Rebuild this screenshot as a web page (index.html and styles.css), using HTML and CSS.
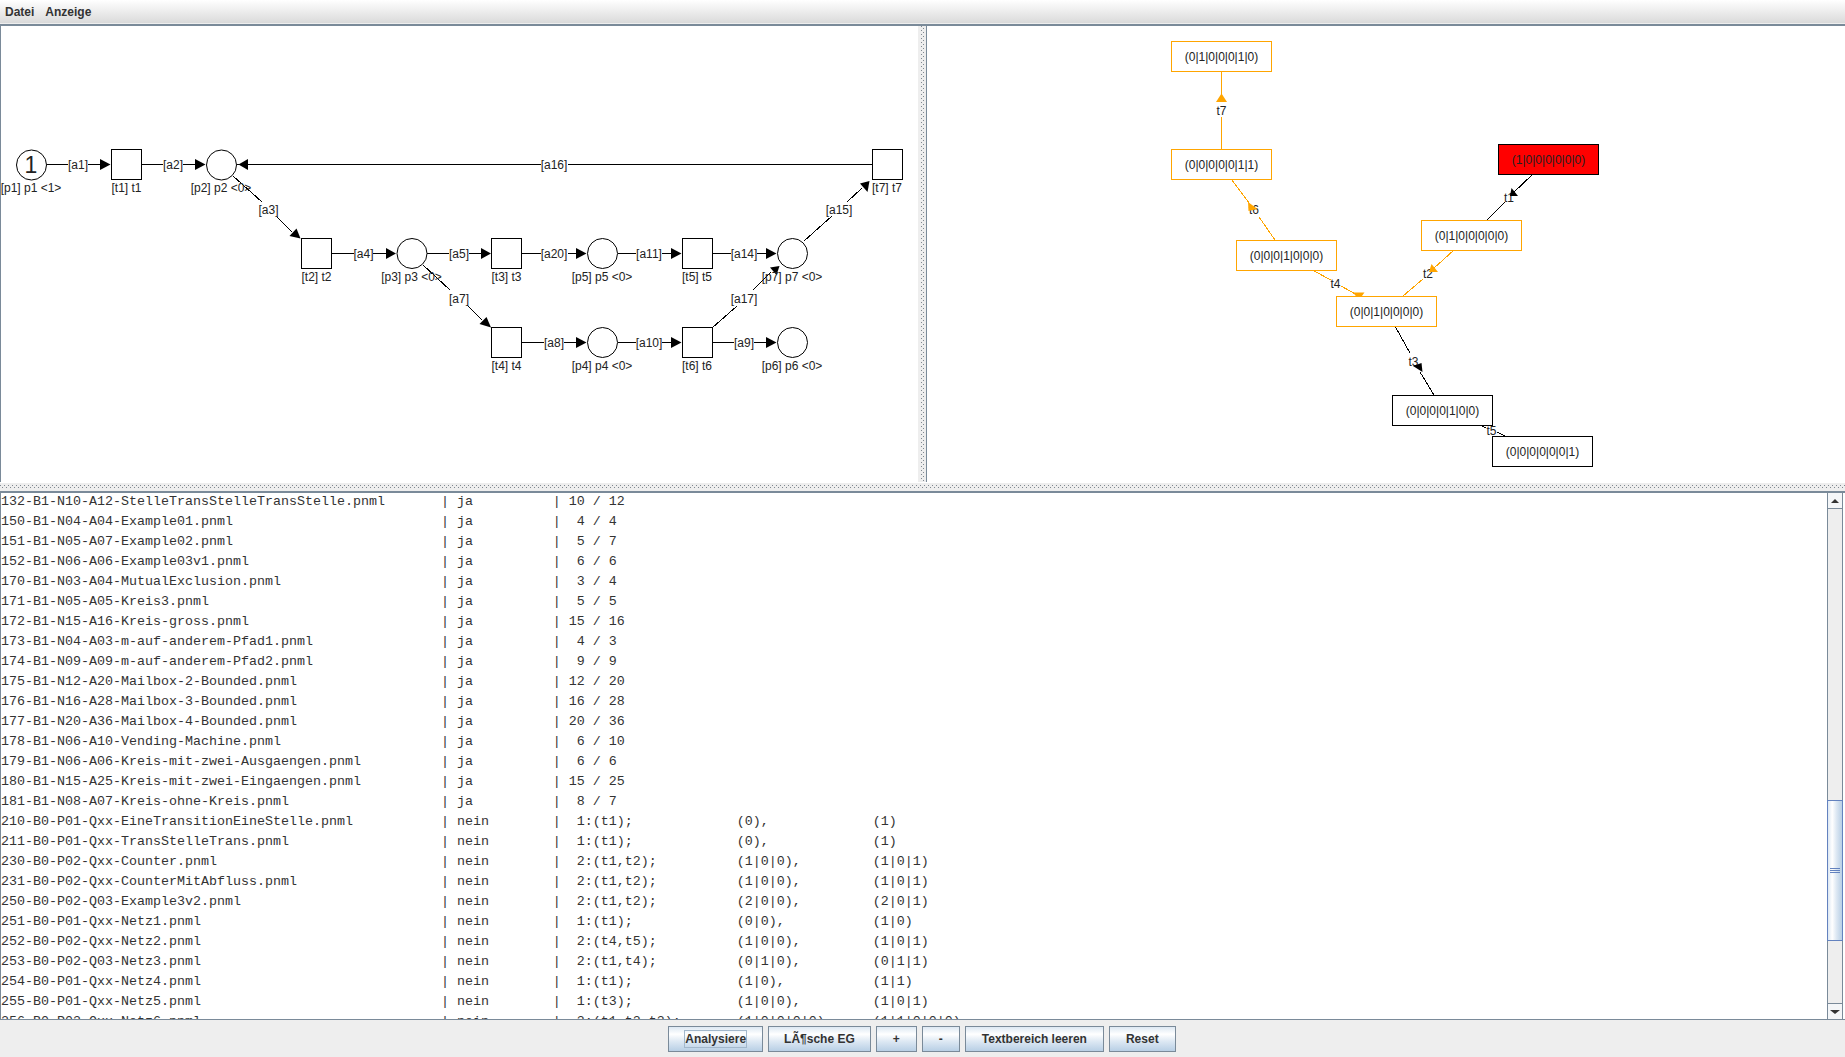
FILE: index.html
```html
<!DOCTYPE html>
<html lang="de">
<head>
  <meta charset="UTF-8">
  <title>Petri-Netz Analyse</title>
  <link rel="stylesheet" href="styles.css">
</head>
<body>

  <div class="menubar">
    <span class="menu-item">Datei</span>
    <span class="menu-item">Anzeige</span>
  </div>

  <div class="main">
    <div class="pane pane-left">
      <svg class="graph" width="917" height="456" viewBox="1 26 917 456">
        <!-- arcs -->
        <path class="arc" d="M47 164.5H68M88 164.5H100"/>
        <path class="arc" d="M142 164.5H163M183 164.5H195"/>
        <path class="arc" d="M237 164.5H540.5M567.5 164.5H872"/>
        <path class="arc" d="M233 176L262 202M277 217L292 232"/>
        <path class="arc" d="M332 253.5H354M373 253.5H386"/>
        <path class="arc" d="M427 253.5H449M469 253.5H481"/>
        <path class="arc" d="M522 253.5H540.5M567.5 253.5H576"/>
        <path class="arc" d="M618 253.5H636M662 253.5H671"/>
        <path class="arc" d="M713 253.5H731M757 253.5H766"/>
        <path class="arc" d="M423 265L450 290M467 305L482 320"/>
        <path class="arc" d="M522 342.5H544M564 342.5H576"/>
        <path class="arc" d="M618 342.5H636M662 342.5H671"/>
        <path class="arc" d="M713 342.5H734M754 342.5H766"/>
        <path class="arc" d="M712 328L737 306M753 290L771 272"/>
        <path class="arc" d="M804 241L832 216M847 202L862 188"/>

        <!-- arrow heads -->
        <polygon points="100,159 100,170 110.500,164.500"/>
        <polygon points="195,159 195,170 205.500,164.500"/>
        <polygon points="248,159 248,170 238.500,164.500"/>
        <polygon points="289.500,236 296.500,228.500 300.500,238.500"/>
        <polygon points="386,248 386,259 396,253.500"/>
        <polygon points="481,248 481,259 491,253.500"/>
        <polygon points="576,248 576,259 586.500,253.500"/>
        <polygon points="671,248 671,259 681.500,253.500"/>
        <polygon points="766,248 766,259 776.500,253.500"/>
        <polygon points="479.500,324 486.500,317 491,327.500"/>
        <polygon points="576,337 576,348 586.500,342.500"/>
        <polygon points="671,337 671,348 681.500,342.500"/>
        <polygon points="766,337 766,348 776.500,342.500"/>
        <polygon points="770,267.500 776.500,275 779.500,266"/>
        <polygon points="860,183.500 867.500,192 869.500,181"/>

        <!-- places -->
        <circle class="node" cx="31.500" cy="165" r="15"/>
        <circle class="node" cx="221.500" cy="165" r="15"/>
        <circle class="node" cx="412" cy="253.500" r="15"/>
        <circle class="node" cx="602.500" cy="253.500" r="15"/>
        <circle class="node" cx="792.500" cy="253.500" r="15"/>
        <circle class="node" cx="602.500" cy="342.500" r="15"/>
        <circle class="node" cx="792.500" cy="342.500" r="15"/>
        <text class="token" x="31" y="173">1</text>

        <!-- transitions -->
        <rect class="node" x="111.500" y="149.500" width="30" height="30"/>
        <rect class="node" x="301.500" y="238.500" width="30" height="30"/>
        <rect class="node" x="491.500" y="238.500" width="30" height="30"/>
        <rect class="node" x="682.500" y="238.500" width="30" height="30"/>
        <rect class="node" x="491.500" y="327.500" width="30" height="30"/>
        <rect class="node" x="682.500" y="327.500" width="30" height="30"/>
        <rect class="node" x="872.500" y="149.500" width="30" height="30"/>

        <!-- arc labels -->
        <text x="78" y="169">[a1]</text>
        <text x="173" y="169">[a2]</text>
        <text x="554" y="169">[a16]</text>
        <text x="268.500" y="214">[a3]</text>
        <text x="363.500" y="258">[a4]</text>
        <text x="459" y="258">[a5]</text>
        <text x="554" y="258">[a20]</text>
        <text x="649" y="258">[a11]</text>
        <text x="744" y="258">[a14]</text>
        <text x="459" y="303">[a7]</text>
        <text x="744" y="303">[a17]</text>
        <text x="839" y="214">[a15]</text>
        <text x="554" y="347">[a8]</text>
        <text x="649" y="347">[a10]</text>
        <text x="744" y="347">[a9]</text>

        <!-- node labels -->
        <text x="31" y="192">[p1] p1 &lt;1&gt;</text>
        <text x="126.500" y="192">[t1] t1</text>
        <text x="221" y="192">[p2] p2 &lt;0&gt;</text>
        <text x="887" y="192">[t7] t7</text>
        <text x="316.500" y="281">[t2] t2</text>
        <text x="411.500" y="281">[p3] p3 &lt;0&gt;</text>
        <text x="506.500" y="281">[t3] t3</text>
        <text x="602" y="281">[p5] p5 &lt;0&gt;</text>
        <text x="697" y="281">[t5] t5</text>
        <text x="792" y="281">[p7] p7 &lt;0&gt;</text>
        <text x="506.500" y="370">[t4] t4</text>
        <text x="602" y="370">[p4] p4 &lt;0&gt;</text>
        <text x="697" y="370">[t6] t6</text>
        <text x="792" y="370">[p6] p6 &lt;0&gt;</text>
      </svg>
    </div>
    <div class="divider-v"></div>
    <div class="pane">
      <svg class="graph" width="918" height="456" viewBox="927 26 918 456">
        <!-- edges -->
        <path class="arc orange" d="M1221.500 71V102M1221.500 117V149"/>
        <path class="arc orange" d="M1232 180L1249 203M1259 217L1275 240"/>
        <path class="arc orange" d="M1314 271L1331 280M1341 286L1359 296"/>
        <path class="arc orange" d="M1454 250L1433 269M1423 279L1403 296"/>
        <path class="arc" d="M1532 175L1513 193M1505 202L1487 220"/>
        <path class="arc" d="M1395.500 327L1410 353M1420 372L1434 395"/>
        <path class="arc" d="M1482 426L1486 428M1497 432L1505 436"/>

        <!-- edge labels -->
        <text x="1221.500" y="115">t7</text>
        <text x="1254" y="214">t6</text>
        <text x="1335.500" y="288">t4</text>
        <text x="1428" y="278">t2</text>
        <text x="1509" y="202">t1</text>
        <text x="1413.500" y="366">t3</text>
        <text x="1491.500" y="435">t5</text>

        <!-- arrow heads -->
        <polygon class="head-orange" points="1221.500,93.500 1216,102 1227,102"/>
        <polygon class="head-orange" points="1248,202 1248.500,211 1257.500,209"/>
        <polygon class="head-orange" points="1353,292.500 1364.500,292.500 1359,300"/>
        <polygon class="head-orange" points="1431.500,264 1438,272 1429,272"/>
        <polygon points="1511.500,188 1518,196 1510,196"/>
        <polygon points="1413,366 1421.500,363 1422.500,372"/>

        <!-- states -->
        <rect class="state orange" x="1171.500" y="41.500" width="100" height="30"/>
        <rect class="state orange" x="1171.500" y="149.500" width="100" height="30"/>
        <rect class="state orange" x="1236.500" y="240.500" width="100" height="30"/>
        <rect class="state orange" x="1421.500" y="220.500" width="100" height="30"/>
        <rect class="state orange" x="1336.500" y="296.500" width="100" height="30"/>
        <rect class="state start" x="1498.500" y="144.500" width="100" height="30"/>
        <rect class="state" x="1392.500" y="395.500" width="100" height="30"/>
        <rect class="state" x="1492.500" y="436.500" width="100" height="30"/>

        <text x="1221.500" y="61">(0|1|0|0|0|1|0)</text>
        <text x="1221.500" y="169">(0|0|0|0|0|1|1)</text>
        <text x="1286.500" y="260">(0|0|0|1|0|0|0)</text>
        <text x="1471.500" y="240">(0|1|0|0|0|0|0)</text>
        <text x="1386.500" y="316">(0|0|1|0|0|0|0)</text>
        <text x="1548.500" y="164">(1|0|0|0|0|0|0)</text>
        <text x="1442.500" y="415">(0|0|0|0|1|0|0)</text>
        <text x="1542.500" y="456">(0|0|0|0|0|0|1)</text>
      </svg>
    </div>
  </div>

  <div class="divider-h"></div>

  <div class="output">
    <pre class="output-text">132-B1-N10-A12-StelleTransStelleTransStelle.pnml       | ja          | 10 / 12
150-B1-N04-A04-Example01.pnml                          | ja          |  4 / 4
151-B1-N05-A07-Example02.pnml                          | ja          |  5 / 7
152-B1-N06-A06-Example03v1.pnml                        | ja          |  6 / 6
170-B1-N03-A04-MutualExclusion.pnml                    | ja          |  3 / 4
171-B1-N05-A05-Kreis3.pnml                             | ja          |  5 / 5
172-B1-N15-A16-Kreis-gross.pnml                        | ja          | 15 / 16
173-B1-N04-A03-m-auf-anderem-Pfad1.pnml                | ja          |  4 / 3
174-B1-N09-A09-m-auf-anderem-Pfad2.pnml                | ja          |  9 / 9
175-B1-N12-A20-Mailbox-2-Bounded.pnml                  | ja          | 12 / 20
176-B1-N16-A28-Mailbox-3-Bounded.pnml                  | ja          | 16 / 28
177-B1-N20-A36-Mailbox-4-Bounded.pnml                  | ja          | 20 / 36
178-B1-N06-A10-Vending-Machine.pnml                    | ja          |  6 / 10
179-B1-N06-A06-Kreis-mit-zwei-Ausgaengen.pnml          | ja          |  6 / 6
180-B1-N15-A25-Kreis-mit-zwei-Eingaengen.pnml          | ja          | 15 / 25
181-B1-N08-A07-Kreis-ohne-Kreis.pnml                   | ja          |  8 / 7
210-B0-P01-Qxx-EineTransitionEineStelle.pnml           | nein        |  1:(t1);             (0),             (1)
211-B0-P01-Qxx-TransStelleTrans.pnml                   | nein        |  1:(t1);             (0),             (1)
230-B0-P02-Qxx-Counter.pnml                            | nein        |  2:(t1,t2);          (1|0|0),         (1|0|1)
231-B0-P02-Qxx-CounterMitAbfluss.pnml                  | nein        |  2:(t1,t2);          (1|0|0),         (1|0|1)
250-B0-P02-Q03-Example3v2.pnml                         | nein        |  2:(t1,t2);          (2|0|0),         (2|0|1)
251-B0-P01-Qxx-Netz1.pnml                              | nein        |  1:(t1);             (0|0),           (1|0)
252-B0-P02-Qxx-Netz2.pnml                              | nein        |  2:(t4,t5);          (1|0|0),         (1|0|1)
253-B0-P02-Q03-Netz3.pnml                              | nein        |  2:(t1,t4);          (0|1|0),         (0|1|1)
254-B0-P01-Qxx-Netz4.pnml                              | nein        |  1:(t1);             (1|0),           (1|1)
255-B0-P01-Qxx-Netz5.pnml                              | nein        |  1:(t3);             (1|0|0),         (1|0|1)
256-B0-P03-Qxx-Netz6.pnml                              | nein        |  3:(t1,t2,t3);       (1|0|0|0|0),     (1|1|0|0|0)</pre>
    <div class="scrollbar">
      <div class="scroll-btn scroll-up"><span class="arrow-up"></span></div>
      <div class="scroll-track">
        <div class="scroll-thumb">
          <span class="grip"></span>
          <span class="grip"></span>
          <span class="grip"></span>
        </div>
      </div>
      <div class="scroll-btn scroll-down"><span class="arrow-down"></span></div>
    </div>
  </div>

  <div class="buttons">
    <button class="btn"><span class="focus-mark">Analysiere</span></button>
    <button class="btn btn-tight">LÃ¶sche EG</button>
    <button class="btn">+</button>
    <button class="btn">-</button>
    <button class="btn">Textbereich leeren</button>
    <button class="btn">Reset</button>
  </div>

</body>
</html>
```
FILE: styles.css
```css
body {
  font-family: "Liberation Sans", Arial, sans-serif;
  margin: 0;
  height: 100vh;
  display: flex;
  flex-direction: column;
  overflow: hidden;
  background-color: #eeeeee;
  color: #333;
}
.menubar {
  flex: none;
  height: 23px;
  display: flex;
  align-items: center;
  gap: 11px;
  padding-left: 5px;
  background: linear-gradient(#ffffff, #dadada);
  border-bottom: 1px solid #eeeeee;
  font-size: 12px;
  font-weight: bold;
}
.main {
  flex: none;
  height: 457px;
  display: flex;
  align-items: flex-start;
  background-color: #fff;
  border-top: 2px solid #7a8a99;
}
.pane {
  flex: 1;
  height: 456px;
  background-color: #fff;
}
.pane-left {
  flex: none;
  width: 917px;
  border-left: 1px solid #7a8a99;
}
.graph {
  display: block;
}
.graph text {
  font-size: 12px;
  text-anchor: middle;
  fill: #222;
}
.graph .token {
  font-size: 23px;
}
.arc {
  fill: none;
  stroke: #000;
  stroke-width: 1;
  shape-rendering: crispEdges;
}
.arc.orange {
  stroke: #ffa500;
}
.head-orange {
  fill: #ffa500;
}
.node {
  fill: #fff;
  stroke: #000;
  stroke-width: 1;
}
.state {
  fill: #fff;
  stroke: #000;
  stroke-width: 1;
}
.state.orange {
  stroke: #ffa500;
}
.state.start {
  fill: #ff0000;
}
.divider-v {
  flex: none;
  width: 8px;
  height: 456px;
  background-color: #eeeeee;
  border-right: 1px solid #7a8a99;
  background-image:
    radial-gradient(circle at 0.5px 0.5px, #808890 0.7px, transparent 0.8px),
    radial-gradient(circle at 0.5px 0.5px, #808890 0.7px, transparent 0.8px);
  background-size: 50px 4px;
  background-position: 3px 0, 5px 2px;
}
.divider-h {
  flex: none;
  height: 8px;
  background-color: #eeeeee;
  background-image:
    radial-gradient(circle at 0.5px 0.5px, #808890 0.7px, transparent 0.8px),
    radial-gradient(circle at 0.5px 0.5px, #808890 0.7px, transparent 0.8px);
  background-size: 4px 50px;
  background-position: 0 2px, 2px 4px;
}
.output {
  flex: none;
  height: 526px;
  display: flex;
  background-color: #fff;
  border-top: 2px solid #7a8a99;
  border-bottom: 1px solid #7a8a99;
  border-left: 1px solid #7a8a99;
}
.output-text {
  flex: 1;
  margin: -1px 0 0;
  overflow: hidden;
  font-family: "Liberation Mono", "Courier New", monospace;
  font-size: 13.333px;
  line-height: 20px;
  color: #333;
}
.scrollbar {
  flex: none;
  width: 14px;
  margin-right: 2px;
  display: flex;
  flex-direction: column;
  background-color: #eeeeee;
  border-left: 1px solid #7a8a99;
  border-right: 1px solid #7a8a99;
}
.scroll-btn {
  flex: none;
  height: 15px;
  display: flex;
  align-items: center;
  justify-content: center;
  background-color: #f4f6f8;
}
.scroll-up {
  border-bottom: 1px solid #7a8a99;
}
.scroll-down {
  border-top: 1px solid #7a8a99;
}
.arrow-up {
  border-left: 4px solid transparent;
  border-right: 4px solid transparent;
  border-bottom: 4px solid #333;
}
.arrow-down {
  border-left: 5px solid transparent;
  border-right: 5px solid transparent;
  border-top: 4px solid #333;
}
.scroll-track {
  flex: 1;
  padding-top: 291px;
}
.scroll-thumb {
  height: 139px;
  display: flex;
  flex-direction: column;
  align-items: center;
  justify-content: center;
  gap: 1px;
  border-top: 1px solid #6382bf;
  border-bottom: 1px solid #6382bf;
  margin: 0 -1px;
  border-left: 1px solid #6382bf;
  border-right: 1px solid #6382bf;
  background: linear-gradient(90deg, #dde8f3, #ffffff 30%, #dde8f3 60%, #b8cfe5);
}
.grip {
  width: 10px;
  height: 1px;
  background-color: #6382bf;
}
.buttons {
  flex: 1;
  display: flex;
  justify-content: center;
  align-items: flex-start;
  gap: 5px;
  padding-top: 6px;
  padding-right: 1px;
}
.btn {
  height: 26px;
  padding: 0 16px;
  font-family: inherit;
  font-size: 12px;
  font-weight: bold;
  color: #333;
  border: 1px solid #7a8a99;
  border-radius: 0;
  background: linear-gradient(#dde8f3, #ffffff 30%, #dde8f3 60%, #b8cfe5);
}
.btn-tight {
  padding: 0 15px;
}
.focus-mark {
  display: inline-block;
  margin: 0 -1px;
  line-height: 16px;
  border: 1px solid #a3b8cc;
}
```
